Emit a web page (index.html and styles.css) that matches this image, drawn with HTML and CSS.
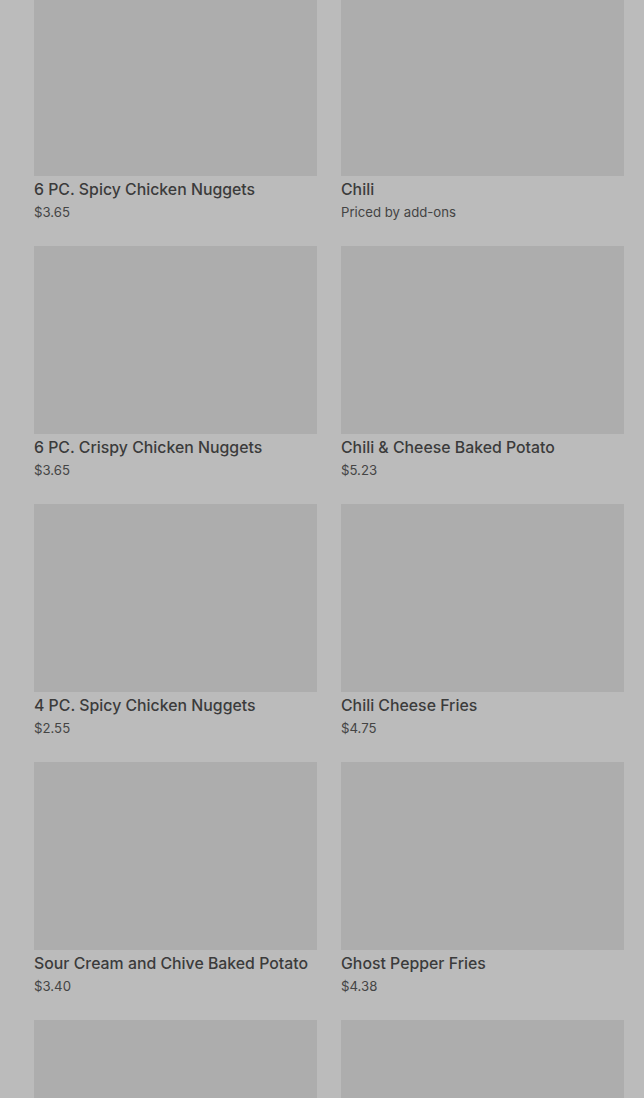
FILE: index.html
```html
<!DOCTYPE html>
<html lang="en">
<head>
<meta charset="utf-8">
<link rel="stylesheet" href="styles.css">
</head>
<body>
<main class="grid">
  <div class="card"><div class="thumb"></div><div class="title">6 PC. Spicy Chicken Nuggets</div><div class="price">$3.65</div></div>
  <div class="card"><div class="thumb"></div><div class="title">Chili</div><div class="price">Priced by add-ons</div></div>
  <div class="card"><div class="thumb"></div><div class="title">6 PC. Crispy Chicken Nuggets</div><div class="price">$3.65</div></div>
  <div class="card"><div class="thumb"></div><div class="title">Chili &amp; Cheese Baked Potato</div><div class="price">$5.23</div></div>
  <div class="card"><div class="thumb"></div><div class="title">4 PC. Spicy Chicken Nuggets</div><div class="price">$2.55</div></div>
  <div class="card"><div class="thumb"></div><div class="title">Chili Cheese Fries</div><div class="price">$4.75</div></div>
  <div class="card"><div class="thumb"></div><div class="title">Sour Cream and Chive Baked Potato</div><div class="price">$3.40</div></div>
  <div class="card"><div class="thumb"></div><div class="title">Ghost Pepper Fries</div><div class="price">$4.38</div></div>
  <div class="card"><div class="thumb"></div><div class="title">&nbsp;</div><div class="price">&nbsp;</div></div>
  <div class="card"><div class="thumb"></div><div class="title">&nbsp;</div><div class="price">&nbsp;</div></div>
</main>
</body>
</html>
```
FILE: styles.css
```css
html, body {
  margin: 0;
  padding: 0;
  background: #bbbbbb;
  overflow: hidden;
}
body {
  height: 1098px;
  font-family: Inter, Roboto, "Liberation Sans", sans-serif;
  color: #3b3b3b;
}
.grid {
  display: grid;
  grid-template-columns: 1fr 1fr;
  column-gap: 24px;
  row-gap: 24px;
  padding: 0 20px 0 34px;
  margin-top: -12px;
}
.thumb {
  height: 188px;
  background: #adadad;
}
.title {
  margin-top: 4px;
  font-size: 15.85px;
  font-weight: 500;
  line-height: 20px;
}
.price {
  margin-top: 3px;
  font-size: 13.2px;
  line-height: 19px;
  color: #444444;
}
```
